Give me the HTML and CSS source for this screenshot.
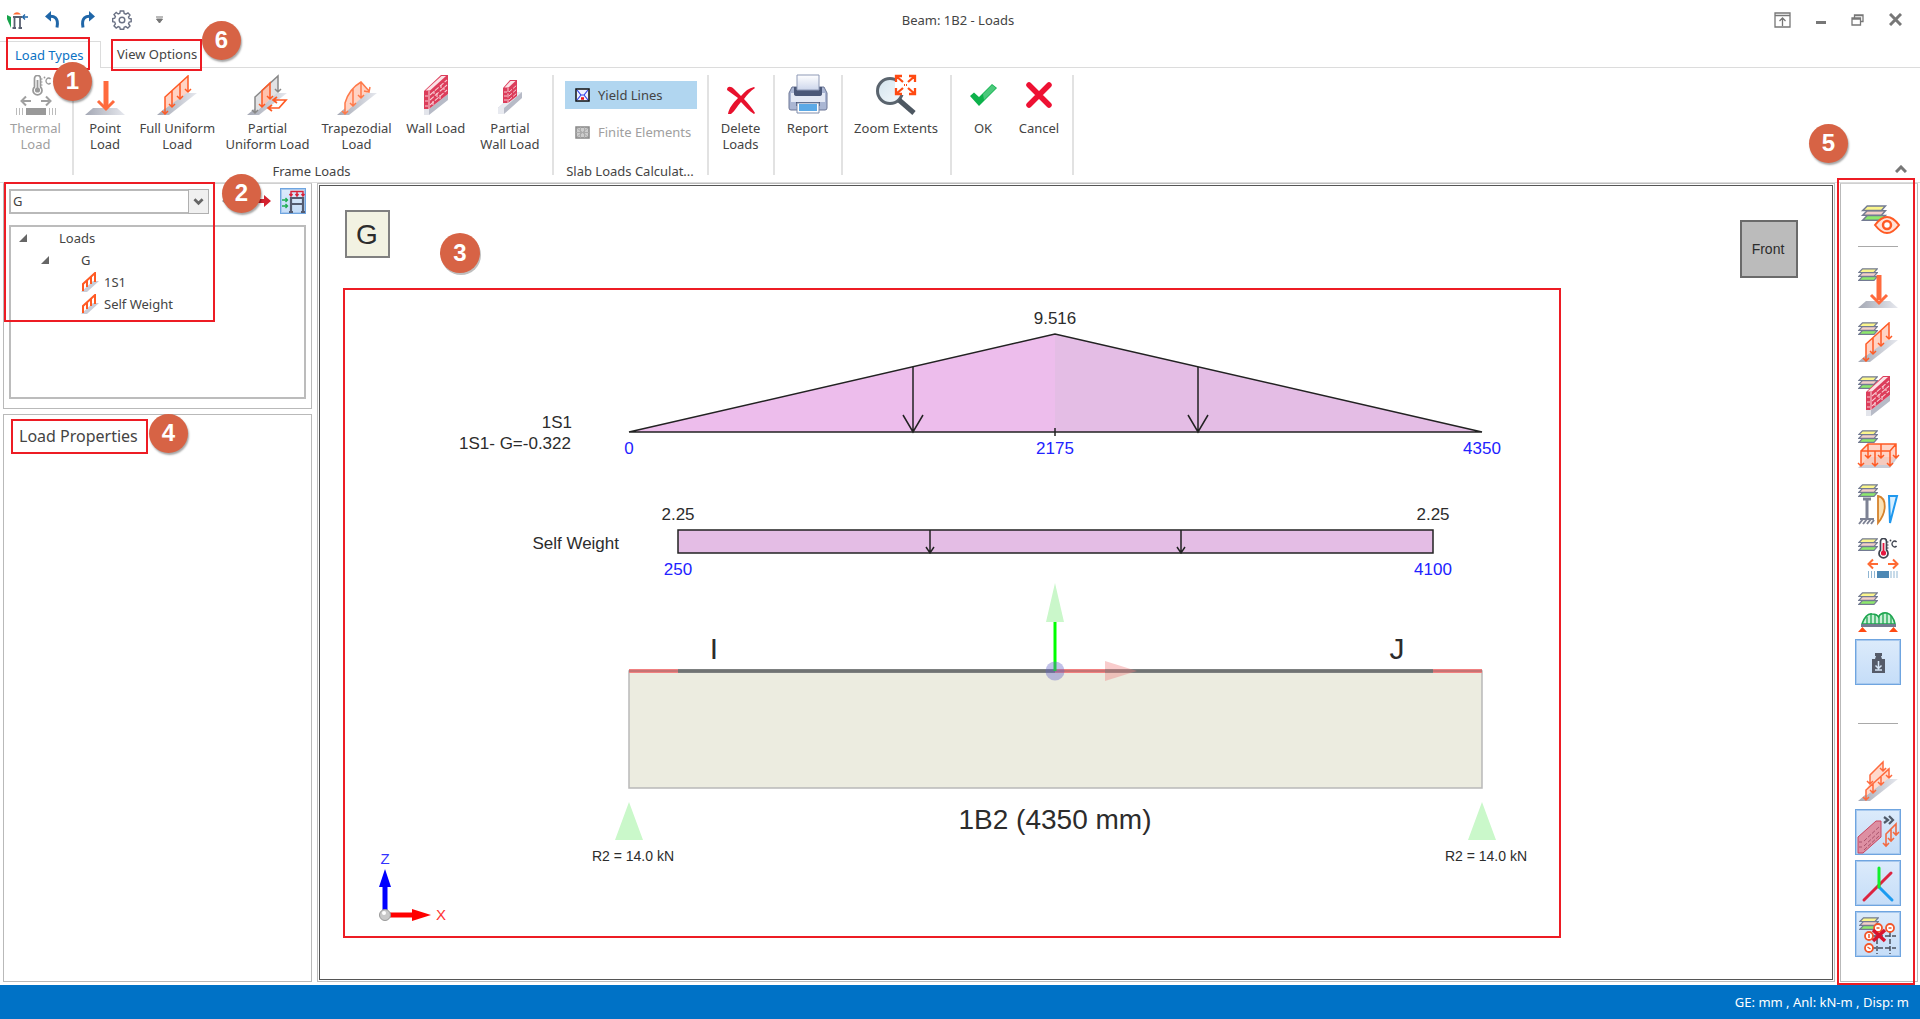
FILE: index.html
```html
<!DOCTYPE html>
<html lang="en">
<head>
<meta charset="utf-8">
<title>Beam: 1B2 - Loads</title>
<link rel="stylesheet" href="styles.css">
</head>
<body>
<svg class="defs" aria-hidden="true">
  <defs>
    <linearGradient id="steel" x1="0" y1="0" x2="1" y2="0"><stop offset="0" stop-color="#a4a8b4"/><stop offset="1" stop-color="#e6e8ee"/></linearGradient>
    <linearGradient id="glass" x1="0" y1="0" x2="1" y2="1"><stop offset="0" stop-color="#d3e4ee"/><stop offset="1" stop-color="#f4f9fc"/></linearGradient>
    <linearGradient id="paper" x1="0" y1="0" x2="0" y2="1"><stop offset="0" stop-color="#ffffff"/><stop offset="1" stop-color="#cdd6ec"/></linearGradient>
    <symbol id="layers" viewBox="0 0 20 13">
      <g stroke="#737b92" stroke-width="1.2">
        <path d="M4.5 8.6H19.300L16 12.300H.8Z" fill="#8de86c"/>
        <path d="M4.500 4.700H19.300L16 8.400H.8Z" fill="#f3cfc9"/>
        <path d="M4.500.8H19.300L16 4.500H.8Z" fill="#fbf68c"/>
      </g>
    </symbol>
    <symbol id="uniform" viewBox="0 0 40 40">
      <path d="M0 40H12L40 18H26Z" fill="url(#steel)"/>
      <path d="M8 39V22L31 1V17L8 34Z" fill="#ffd3c4"/>
      <g fill="none" stroke="#ff5a24" stroke-width="1.500">
        <path d="M8 39V22L31 1V17M15 32V15.500M23 24V8.500"/>
        <path d="M5 36l3 3 3-3M12 29l3 3 3-3M20 21l3 3 3-3M28 14l3 3 3-3"/>
      </g>
    </symbol>
    <symbol id="wall" viewBox="0 0 40 40">
      <path d="M8 34H13L32 19V25L13 40H8Z" fill="#b7bbc7"/>
      <path d="M8 34H13V40H8Z" fill="#e3e5eb"/>
      <path d="M8 16L25 0H32V19L13 34H8Z" fill="#dc3d5b"/>
      <path d="M9.500 15.500L25.500 1H30L14 15.500Z" fill="#fbe3e7"/>
      <g stroke="#f7ccd4" stroke-width="1.100" fill="none">
        <path d="M14 20L31 5M14 25L31 10M14 30L31 15" stroke-dasharray="5 1.500"/>
        <path d="M13 16V34M18 16v3M25 10v3M21 18v4M28 12v3M17 26v4M24 20v4M9 21h3M9 26h3M9 31h3"/>
      </g>
    </symbol>
    <symbol id="thermo" viewBox="0 0 20 21">
      <path d="M3.500 3.500a3 3 0 0 1 6 0V12a4.500 4.500 0 1 1-6 0Z" fill="#fff" stroke="currentColor" stroke-width="1.700"/>
      <circle cx="6.500" cy="15" r="2.600" class="bulb"/><path d="M6.500 5v10" class="bulbline" stroke-width="1.800"/>
      <path d="M9.500 4h2M9.500 7h2M9.500 10h2" stroke="currentColor"/>
      <circle cx="13.500" cy="2.500" r=".9" fill="currentColor"/>
      <path d="M19.500 4a2.500 3 0 1 0 0 4" fill="none" stroke="currentColor" stroke-width="1.300"/>
    </symbol>
  </defs>
</svg>

<div class="app">
  <header class="titlebar">
    <div class="quick">
      <button class="flat" aria-label="Loads"><svg width="22" height="20" viewBox="0 0 22 20"><path d="M1 5l4 2v11L1 9Z" fill="#16a34a"/><path d="M7 7h9M8.500 7v11M14 7v11M6.500 18h3.500M12.500 18H16" stroke="#596070" stroke-width="1.800" fill="none"/><path d="M7 4.500Q11 0 15 4.500Z" fill="#ff6a33"/><path d="M22 7h-5M19 4.500L16.500 7 19 9.500" stroke="#1f66a8" stroke-width="1.300" fill="none"/></svg></button>
      <button class="flat" aria-label="Undo"><svg width="18" height="20" viewBox="0 0 18 20"><path d="M4 6.500c6-1 11 1 9 11" stroke="#1f66a8" stroke-width="3" fill="none"/><path d="M1 6.500L7 1v10.500Z" fill="#1f66a8"/></svg></button>
      <button class="flat" aria-label="Redo"><svg width="18" height="20" viewBox="0 0 18 20"><path d="M14 6.500c-6-1-11 1-9 11" stroke="#1f66a8" stroke-width="3" fill="none"/><path d="M17 6.500L11 1v10.500Z" fill="#1f66a8"/></svg></button>
      <button class="flat" aria-label="Settings"><svg width="20" height="20" viewBox="0 0 20 20" fill="none" stroke="#6b7285" stroke-width="1.400"><circle cx="10" cy="10" r="2.800"/><path d="M8.300 1h3.400l.5 2.500 1.700.7L16 2.800 18 5l-1.500 2 .7 1.500 2 .3v2.800l-2 .4-.7 1.700L18 16l-2.200 2-2-1.400-1.700.7-.4 2H8.300l-.5-2-1.600-.7L4.200 18 2 15.800l1.400-2-.7-1.700-2-.4V8.600l2-.4.7-1.600L2 4.500 4.200 2.500l2 1.500 1.600-.7Z"/></svg></button>
      <button class="flat" aria-label="Customize quick access"><svg width="8" height="8" viewBox="0 0 8 8"><path d="M0 1h7M.5 3h6L3.500 7Z" fill="#777" stroke="#777"/></svg></button>
    </div>
    <h1 class="title">Beam: 1B2 - Loads</h1>
    <div class="window-buttons">
      <button class="flat" aria-label="Ribbon display"><svg width="17" height="16" viewBox="0 0 17 16" fill="none" stroke="#777" stroke-width="1.300"><path d="M1 1h15v14H1ZM1 3.500h15M8.500 14V6M5.500 9l3-3 3 3"/></svg></button>
      <button class="flat" aria-label="Minimize"><svg width="10" height="16" viewBox="0 0 10 16"><path d="M0 10.500h10" stroke="#777" stroke-width="3"/></svg></button>
      <button class="flat" aria-label="Restore"><svg width="13" height="14" viewBox="0 0 13 14" fill="none" stroke="#777" stroke-width="1.300"><path d="M1 5h8.500v7H1ZM1 6h8.500M3.500 4.500V2H12v6.500H9.500M3.500 2.500H12"/></svg></button>
      <button class="flat" aria-label="Close"><svg width="13" height="13" viewBox="0 0 13 13"><path d="M1 1l11 11M12 1L1 12" stroke="#777" stroke-width="3"/></svg></button>
    </div>
  </header>

  <nav class="tabs" aria-label="Ribbon tabs">
    <button class="tab tab-active">Load Types</button>
    <button class="tab">View Options</button>
    <span class="frame frame-types"></span>
    <span class="frame frame-view"></span>
    <span class="badge badge-1">1</span>
    <span class="badge badge-6">6</span>
  </nav>

  <section class="ribbon">
    <div class="group group-thermal">
      <div class="buttons">
        <button class="big" disabled><svg class="icon gray" viewBox="0 0 40 40"><use href="#thermo" x="15" y="0" width="20" height="21"/><path d="M15 26H7M10 21.500L5.500 26l4.500 4.500M25 26h8M30 21.500l4.500 4.500-4.500 4.500" fill="none" stroke="#a0a0a0" stroke-width="2"/><path d="M10 33h20v7H10Z" fill="#999"/><path d="M.5 33v7M3.500 33v7M6.500 33v7M33.500 33v7M36.500 33v7M39.500 33v7" stroke="#bbb"/></svg><span>Thermal<br>Load</span></button>
      </div>
    </div>
    <div class="group group-frame">
      <div class="buttons">
        <button class="big w-point"><svg class="icon" viewBox="0 0 40 40"><path d="M8 33H32L40 40H0Z" fill="url(#steel)"/><path d="M21 6V32" stroke="#ff6a3d" stroke-width="5"/><path d="M13 26l8 8 8-8" fill="none" stroke="#ff6a3d" stroke-width="3"/></svg><span>Point<br>Load</span></button>
        <button class="big w-full"><svg class="icon" viewBox="0 0 40 40"><use href="#uniform"/></svg><span>Full Uniform<br>Load</span></button>
        <button class="big w-partial"><svg class="icon" viewBox="0 0 40 40"><path d="M0 40H12L40 18H26Z" fill="url(#steel)"/><path d="M8 38V22L31 1V17L8 38Z" fill="#e2e2e4"/><path d="M15 32V15.500L23 8V24Z" fill="#ffc2ae"/><path d="M8 38V22L31 1V17M5 35l3 3 3-3M28 14l3 3 3-3" fill="none" stroke="#888" stroke-width="1.500"/><path d="M15 32V15.500L23 8V24M12 29l3 3 3-3M20 21l3 3 3-3" fill="none" stroke="#ff5a24" stroke-width="1.500"/><path d="M27 25H39L32 33H21M30 22l-4 3 4 3M25 30l-4 3 4 3" fill="none" stroke="#ff5a24" stroke-width="1.700"/></svg><span>Partial<br>Uniform Load</span></button>
        <button class="big w-trap"><svg class="icon" viewBox="0 0 40 40"><path d="M0 40H12L40 18H26Z" fill="url(#steel)"/><path d="M8 38V28Q12 14 24 7L32 16Z" fill="#ffd3c4"/><path d="M8 38V28Q12 14 24 7L32 16M16 30V13M24 23V7M5 36l3 3 3-3M13 28l3 3 3-3M21 20l3 3 3-3M27 16l5 1 1-5" fill="none" stroke="#ff7a4a" stroke-width="1.500"/></svg><span>Trapezodial<br>Load</span></button>
        <button class="big w-wall"><svg class="icon" viewBox="0 0 40 40"><use href="#wall"/></svg><span>Wall Load</span></button>
        <button class="big w-wall"><svg class="icon" viewBox="0 0 40 40"><path d="M8 33L26 17H32V23L14 39H8Z" fill="#b7bbc7"/><path d="M8 33H14V39H8ZM8 33L26 17H32L14 33Z" fill="#e8eaf0"/><path d="M13 13L20 5H27V21L18 28H13Z" fill="#dc3d5b"/><path d="M14.500 12.500L20.500 6H25.500L18.500 12.500Z" fill="#fbe3e7"/><path d="M18 13V28M19 17l8-7M19 21l8-7M19 25l8-7M14 17h3M14 21h3M14 25h3" stroke="#f7ccd4" stroke-dasharray="4 1.500"/></svg><span>Partial<br>Wall Load</span></button>
      </div>
      <div class="group-label">Frame Loads</div>
    </div>
    <div class="group group-slab">
      <div class="options">
        <button class="option option-on"><svg width="15" height="14" viewBox="0 0 15 14"><path d="M1 1h13v12H1Z" fill="#eef2ff" stroke="#111" stroke-width="1.500"/><path d="M2 2l4 5h3l4-5M2 12l4-5M13 12L9 7" fill="none" stroke="#3340e8" stroke-width="1.200"/><path d="M6 10.500h3" stroke="#e11" stroke-width="2.500"/></svg>Yield Lines</button>
        <button class="option" disabled><svg width="15" height="13" viewBox="0 0 15 13"><path d="M1 1h13v11H1Z" fill="#ccc" stroke="#888" stroke-width="1.500"/><path d="M1 6.500h13M5.500 1v11M9.500 1v11M2 2l11 9M13 2L2 11" stroke="#aaa"/></svg>Finite Elements</button>
      </div>
      <div class="group-label">Slab Loads Calculat...</div>
    </div>
    <div class="group group-delete">
      <div class="buttons"><button class="big"><svg class="icon" viewBox="0 0 40 40"><path d="M6 15C6 11 10 11 13 14L20 21C24 16 28 13 33 12L34 13C29 16 26 20 23 24C27 28 31 33 34 38L33 39C28 36 24 31 20 27C16 31 14 36 10 39H7C8 33 12 28 17 23Z" fill="#e8112d"/></svg><span>Delete<br>Loads</span></button></div>
    </div>
    <div class="group group-report">
      <div class="buttons"><button class="big"><svg class="icon" viewBox="0 0 40 40"><path d="M4 12H36L39 18V33Q39 35 37 35H3Q1 35 1 33V18Z" fill="#aab6d3" stroke="#6c7796"/><path d="M3 18H37V27H3Z" fill="#e4e9f5"/><path d="M6 12H34V19Q34 21 31 21H9Q6 21 6 19Z" fill="#4b5878"/><path d="M9 0H31V15H9Z" fill="url(#paper)" stroke="#8d98b5"/><path d="M8 27H32V31H8Z" fill="#4b5878"/><path d="M9 28H31V38H9Z" fill="#fff" stroke="#7f8cab"/><path d="M11 29H29V36H11Z" fill="#5ba9e6"/></svg><span>Report</span></button></div>
    </div>
    <div class="group group-zoom">
      <div class="buttons"><button class="big"><svg class="icon" viewBox="0 0 40 40"><circle cx="14" cy="16" r="12.500" fill="url(#glass)" stroke="#5a646e" stroke-width="3"/><path d="M23 25L38 38" stroke="#4d5761" stroke-width="5"/><path d="M19 0H40V20H19Z" fill="#fff"/><path d="M20 1l7 6M39 1l-7 6M20 19l7-6M39 19l-7-6M20 7V1h6M33 1h6v6M39 13v6h-6M26 19h-6v-6" fill="none" stroke="#ff4a12" stroke-width="2.300"/><path d="M28 10h3" stroke="#ff4a12" stroke-width="2" stroke-dasharray="1 1"/></svg><span>Zoom Extents</span></button></div>
    </div>
    <div class="group group-confirm">
      <div class="buttons">
        <button class="big w-ok"><svg class="icon" viewBox="0 0 40 40"><path d="M7 21L11 17.500L16 22L29 9L34 13L16 31Z" fill="#0db14b"/><path d="M20 19L29 10L33 13L21 25Z" fill="#4cc97c"/></svg><span>OK</span></button>
        <button class="big w-cancel"><svg class="icon" viewBox="0 0 40 40"><path d="M10 10L30 30M30 10L10 30" stroke="#ee1133" stroke-width="5.500" stroke-linecap="round"/></svg><span>Cancel</span></button>
      </div>
    </div>
    <button class="flat collapse" aria-label="Collapse ribbon"><svg width="12" height="8" viewBox="0 0 12 8"><path d="M1 7l5-5 5 5" fill="none" stroke="#777" stroke-width="3"/></svg></button>
  </section>

  <main class="work">
    <div class="side">
      <section class="panel cases">
        <div class="case-row">
          <div class="combo">
            <select aria-label="Load case"><option>G</option></select>
            <svg class="combo-arrow" viewBox="0 0 21 23"><path d="M6 9l4.500 4.500L15 9" fill="none" stroke="#666" stroke-width="3"/></svg>
          </div>
          <button class="flat step" aria-label="Previous case"><svg width="22" height="14" viewBox="0 0 22 14"><path d="M0 7l6-5v3h14v4H6v3Z" fill="#9a9a9a"/></svg></button>
          <button class="flat step" aria-label="Next case"><svg width="22" height="14" viewBox="0 0 22 14"><path d="M22 7l-7-6v4H2v4h13v4Z" fill="#d4222f"/></svg></button>
          <button class="toggle toggle-small" aria-label="Frame loads" aria-pressed="true"><svg width="23" height="23" viewBox="0 0 23 23"><path d="M9 22V8h12v14M9 14h12M7 22h4M19 22h4" stroke="#555c70" stroke-width="2.200" fill="none"/><path d="M9 6V1.500h12V6M15 1.500V6M7.500 4L9 6l1.500-2M13.500 4L15 6l1.500-2M19.500 4L21 6l1.500-2" stroke="#d8233a" stroke-width="1.400" fill="none"/><path d="M0 10h5M0 16h5M3.500 8l2 2-2 2M3.500 14l2 2-2 2" stroke="#1fae52" stroke-width="1.400" fill="none"/></svg></button>
        </div>
        <ul class="tree">
          <li class="row level-0"><svg class="caret" viewBox="0 0 8 8"><path d="M8 0V8H0Z" fill="#666"/></svg>Loads</li>
          <li class="row level-1"><svg class="caret" viewBox="0 0 8 8"><path d="M8 0V8H0Z" fill="#666"/></svg>G</li>
          <li class="row level-2"><svg class="leaf" viewBox="0 0 18 20"><path d="M0 20H6L18 9H12Z" fill="#c9ccd6"/><path d="M2 19V12L14 1V10M6 15V9M10 12V5" fill="none" stroke="#ff5a24" stroke-width="2"/></svg>1S1</li>
          <li class="row level-2"><svg class="leaf" viewBox="0 0 18 20"><path d="M0 20H6L18 9H12Z" fill="#c9ccd6"/><path d="M2 19V12L14 1V10M6 15V9M10 12V5" fill="none" stroke="#ff5a24" stroke-width="2"/></svg>Self Weight</li>
        </ul>
        <span class="frame frame-cases"></span>
        <span class="badge badge-2">2</span>
      </section>
      <section class="panel properties">
        <h2 class="heading">Load Properties</h2>
        <span class="frame frame-props"></span>
        <span class="badge badge-4">4</span>
      </section>
    </div>

    <section class="viewport">
      <div class="viewport-inner">
        <svg class="scene" viewBox="320 186 1512 793" role="img" aria-label="Load diagram of beam 1B2">
          <rect x="346" y="211" width="43" height="46" fill="#f2f2e2" stroke="#808080" stroke-width="2"/>
          <text class="t28 mid" x="367" y="244">G</text>
          <rect x="1741" y="221" width="56" height="56" fill="#bbb" stroke="#6a6a6a" stroke-width="2"/>
          <text class="t14 mid" x="1768" y="254">Front</text>

          <path d="M629 432L1055 334V432Z" fill="#edbdec"/>
          <path d="M1055 334L1482 432H1055Z" fill="#e4bde5"/>
          <path class="ink" d="M629 432L1055 334L1482 432Z"/>
          <path class="ink" d="M913 367V432M903 415L913 432L923 415M1198 367V432M1188 415L1198 432L1208 415M1055 428V436"/>
          <text class="t17 mid" x="1055" y="324">9.516</text>
          <text class="t17 end" x="572" y="428">1S1</text>
          <text class="t17 end" x="571" y="449">1S1- G=-0.322</text>
          <text class="t17 mid dim" x="629" y="454">0</text>
          <text class="t17 mid dim" x="1055" y="454">2175</text>
          <text class="t17 mid dim" x="1482" y="454">4350</text>

          <rect class="ink lit" x="678" y="530" width="755" height="23"/>
          <path class="ink" d="M930 530V553M926 547L930 553L934 547M1181 530V553M1177 547L1181 553L1185 547"/>
          <text class="t17 mid" x="678" y="520">2.25</text>
          <text class="t17 mid" x="1433" y="520">2.25</text>
          <text class="t17 end" x="619" y="549">Self Weight</text>
          <text class="t17 mid dim" x="678" y="575">250</text>
          <text class="t17 mid dim" x="1433" y="575">4100</text>

          <rect x="629" y="671" width="853" height="117" fill="#ecece0" stroke="#b9b9b9" stroke-width="1.500"/>
          <path d="M629 671H1482" stroke="#7d8080" stroke-width="4"/>
          <path d="M629 671H678M1055 671H1105M1433 671H1482" stroke="#f08080" stroke-width="4"/>
          <path d="M629 671H1482" stroke="#4d4d4d" stroke-opacity=".5"/>
          <path d="M1105 661L1137 671L1105 681Z" fill="#f08080" fill-opacity=".4"/>
          <path d="M1055 622V671" stroke="#0f0" stroke-width="3"/>
          <path d="M1055 583L1064 622H1046Z" fill="#caf7ca"/>
          <circle cx="1055" cy="671" r="9.500" fill="#6464c8" fill-opacity=".4"/>
          <text class="t30 mid" x="714" y="659">I</text>
          <text class="t30 mid" x="1397" y="659">J</text>
          <text class="t28 mid" x="1055" y="829">1B2 (4350 mm)</text>
          <path d="M629 802L643 840H615ZM1482 802L1496 840H1468Z" fill="#caf8ca"/>
          <text class="t14 mid" x="633" y="861">R2 = 14.0 kN</text>
          <text class="t14 mid" x="1486" y="861">R2 = 14.0 kN</text>

          <path d="M385 886V910" stroke="#00f" stroke-width="5"/><path d="M385 869L391 887H379Z" fill="#00f"/>
          <path d="M390 915H413" stroke="#f00" stroke-width="5"/><path d="M412 909L431 915L412 921Z" fill="#f00"/>
          <circle cx="385" cy="915" r="5.500" fill="#c9c9c9" stroke="#999"/><circle cx="384" cy="913" r="2" fill="#fff"/>
          <text class="t15 mid axis-z" x="385" y="864">Z</text>
          <text class="t15 mid axis-x" x="441" y="920">X</text>

          <rect x="344" y="289" width="1216" height="648" fill="none" stroke="#ed1c24" stroke-width="2"/>
          <circle cx="461" cy="255" r="20" fill="#000" fill-opacity=".25"/>
          <circle cx="460" cy="253" r="20" fill="#d76345"/>
          <text class="num mid" x="460" y="261">3</text>
        </svg>
      </div>
    </section>

    <aside class="panel tools" aria-label="View tools">
      <button class="tool" aria-label="Show loads"><svg class="icon" viewBox="0 0 40 40"><use href="#layers" x="1" y="5" width="30" height="16"/><path d="M17 25Q29 9 41 25Q29 41 17 25Z" fill="#ffe1d6" stroke="#ff5a24" stroke-width="2"/><circle cx="29" cy="25" r="4" fill="#fff" stroke="#ff5a24" stroke-width="2.500"/></svg></button>
      <hr class="rule">
      <div class="tool-set">
        <button class="tool" aria-label="Point loads"><svg class="icon" viewBox="0 0 40 40"><use href="#layers" width="20" height="13"/><path d="M8 33H32L40 40H0Z" fill="url(#steel)"/><path d="M21 7V32" stroke="#ff6a3d" stroke-width="5"/><path d="M13 27l8 8 8-8" fill="none" stroke="#ff6a3d" stroke-width="3"/></svg></button>
        <button class="tool" aria-label="Distributed loads"><svg class="icon" viewBox="0 0 40 40"><use href="#layers" width="20" height="13"/><use href="#uniform"/></svg></button>
        <button class="tool" aria-label="Wall loads"><svg class="icon" viewBox="0 0 40 40"><use href="#layers" width="20" height="13"/><use href="#wall"/></svg></button>
        <button class="tool" aria-label="Area loads"><svg class="icon" viewBox="0 0 40 40"><use href="#layers" width="20" height="13"/><path d="M0 38L10 27H40L32 38Z" fill="#c9ccd6"/><path d="M3 21L10 14H38V27L32 35H3Z" fill="#ffc9b8" fill-opacity=".8"/><path d="M3 36V21H32V36M3 21L10 14H38V28M32 21L38 14M10 14V28M23 14V28M17 21V36M0 33l3 3 3-3M14 33l3 3 3-3M29 33l3 3 3-3M7 25l3 3 3-3M20 25l3 3 3-3M35 25l3 3 3-3" fill="none" stroke="#ff5a24" stroke-width="1.500"/></svg></button>
        <button class="tool" aria-label="Lateral loads"><svg class="icon" viewBox="0 0 40 40"><use href="#layers" width="20" height="13"/><path d="M9 14V34M5 15h8" stroke="#7d8294" stroke-width="3"/><path d="M2 35H16M5 35L1 40M9 35L5 40M13 35L9 40M16 36L13 40" stroke="#7d8294" stroke-width="2"/><path d="M20 12C29 14 29 28 20 39Z" fill="#fbe1b4" stroke="#d5822c" stroke-width="1.800"/><path d="M31 12H39L32 39Z" fill="#d8efff" stroke="#1f98ee" stroke-width="2"/></svg></button>
        <button class="tool" aria-label="Thermal loads"><svg class="icon hot" viewBox="0 0 40 40"><use href="#layers" width="20" height="13"/><use href="#thermo" x="19" y="0" width="20" height="21"/><path d="M20 26H12M15 21.500L10.500 26l4.500 4.500M30 26h8M35 21.500l4.500 4.500-4.500 4.500" fill="none" stroke="#ff6a33" stroke-width="2"/><path d="M19 33H31V40H19Z" fill="#4d88b4"/><path d="M10.500 33v7M13.500 33v7M16.500 33v7M33 33v7M36 33v7M39 33v7" stroke="#8fb6d3"/></svg></button>
        <button class="tool" aria-label="Bridge loads"><svg class="icon" viewBox="0 0 40 40"><use href="#layers" width="20" height="13"/><path d="M4 32Q8 21 14 22Q19 22 20.500 25Q23 20 29 21Q35 23 37 32Z" fill="#c9f0d6" stroke="#1ea650" stroke-width="1.600"/><path d="M9 25v7M13 22v10M17 23v9M21 24v8M25 22v10M29 21v11M33 24v8" stroke="#1ea650" stroke-width="1.300"/><path d="M3 32H38V35H3Z" fill="#747b90"/><path d="M4.500 35L9 40H0ZM35.500 35L40 40H31Z" fill="#ff4a12"/></svg></button>
      </div>
      <button class="toggle" aria-label="Self weight" aria-pressed="true"><svg class="icon" viewBox="0 0 40 40"><path d="M17 11h7v3h-1l1 3h3v14H14V17h3l1-3h-1Z" fill="#555b69"/><path d="M20.500 19v7M17.500 23.500l3 3 3-3M17 28h7" fill="none" stroke="#d6e6f7" stroke-width="1.500"/></svg></button>
      <hr class="rule rule-wide">
      <div class="tool-set tool-set-tight">
        <button class="tool" aria-label="Stack loads"><svg class="icon" viewBox="0 0 40 40"><path d="M0 40H12L40 18H26Z" fill="url(#steel)"/><path d="M8 39V29L12 22V13L25 1V8L31 7V17L8 35Z" fill="#ffd9cc"/><path d="M12 23V14L25 1V10M8 39V29L31 8V17M15 32V23M23 24V15M9 20l3 3 3-3M22 7l3 3 3-3M5 36l3 3 3-3M12 29l3 3 3-3M20 21l3 3 3-3M28 14l3 3 3-3" fill="none" stroke="#ff6a3d" stroke-width="1.500"/></svg></button>
        <button class="toggle" aria-label="Convert wall loads" aria-pressed="true"><svg class="icon" viewBox="0 0 40 40"><path d="M0 25L18 9H23V25L5 41H0Z" fill="#dd8fa2" stroke="#c9445e"/><path d="M6 29L22 14M6 34L22 19M6 38L22 23M1 30h3M1 35h3" stroke="#a9536c" stroke-dasharray="4 1.500"/><path d="M26 5l4 3-4 3M31 4l4 4-4 4" fill="none" stroke="#505a68" stroke-width="2.200"/><path d="M28 34V22L38 12V23M33 29V17M25 31l3 3 3-3M30 26l3 3 3-3M35 20l3 3 3-3" fill="none" stroke="#f26a43" stroke-width="1.600"/></svg></button>
        <button class="toggle" aria-label="Local axes" aria-pressed="true"><svg class="icon" viewBox="0 0 40 40" fill="none" stroke-width="3" stroke-linecap="round"><path d="M6 37L33 10" stroke="#dc2440"/><path d="M21 24L34 37" stroke="#1c9bf0"/><path d="M21 5V24" stroke="#12f02c"/></svg></button>
        <button class="toggle" aria-label="Hide grid" aria-pressed="true"><svg class="icon" viewBox="0 0 40 40"><use href="#layers" x="1" y="3" width="20" height="13"/><path d="M19 18V40M32 18V40M13 22H38M13 34H38" stroke="#49505e" stroke-width="1.500" stroke-dasharray="5 2"/><g fill="#fff" stroke="#f2562a" stroke-width="1.800"><circle cx="20" cy="14" r="4"/><circle cx="32" cy="14" r="4"/><circle cx="11" cy="22" r="4"/><circle cx="11" cy="34" r="4"/></g><path d="M18.500 14h3M30.500 14h3M11 20v4M9.500 33l3 2" stroke="#f2562a" stroke-width="1.500"/><path d="M15 16L27 27M27 16L15 27" stroke="#d9142e" stroke-width="3.500"/></svg></button>
      </div>
      <span class="frame frame-tools"></span>
    </aside>
  </main>

  <footer class="status">GE: mm , Anl: kN-m , Disp: m</footer>
  <span class="badge badge-5">5</span>
</div>
</body>
</html>
```
FILE: styles.css
```css
* { box-sizing: border-box; }

body {
  margin: 0;
  background: #fff;
  color: #444;
  font: 13px/16px "Noto Sans", "Open Sans", sans-serif;
}

button, select { font: inherit; color: inherit; }
button { border: 0; background: none; padding: 0; }
svg { display: block; }
.defs { position: absolute; width: 0; height: 0; }

.app {
  position: relative;
  display: flex;
  flex-direction: column;
  min-height: 100vh;
}

/* title bar */
.titlebar {
  display: grid;
  grid-template-columns: 1fr auto 1fr;
  align-items: center;
  height: 41px;
  padding: 0 18px 2px 6px;
}
.flat { display: flex; align-items: center; justify-content: center; }
.quick { display: flex; align-items: center; gap: 16px; }
.quick .flat:last-child { margin-left: 8px; }
.title { margin: 0 0 0 8px; font-size: 13px; font-weight: 400; }
.window-buttons { display: flex; align-items: center; justify-content: flex-end; gap: 25px; }

/* tabs */
.tabs { position: relative; display: flex; height: 26px; }
.tab { padding: 0 16px; height: 26px; }
.tab-active {
  z-index: 1;
  width: 101px;
  height: 27px;
  padding: 0 0 0 15px;
  text-align: left;
  color: #0b72c4;
  background: #fff;
  border-top: 1px solid #dcdcdc;
  border-right: 1px solid #dcdcdc;
}

/* ribbon */
.ribbon {
  position: relative;
  display: flex;
  height: 116px;
  padding-top: 7px;
  border-top: 1px solid #dcdcdc;
  border-bottom: 1px solid #dcdcdc;
}
.group {
  display: flex;
  flex-direction: column;
  padding-right: 3px;
  background: linear-gradient(#e2e2e2, #e2e2e2) right top / 2px 100px no-repeat;
}
.buttons { display: flex; height: 78px; }
.big {
  display: flex;
  flex: 1 1 auto;
  flex-direction: column;
  align-items: center;
  gap: 5px;
  white-space: nowrap;
}
.big:disabled, .option:disabled { color: #a0a0a0; }
.icon { width: 40px; height: 40px; flex: none; overflow: visible; }
.gray { --bulb: #999; color: #999; }
.hot { color: #3f4450; }
.bulb { fill: var(--bulb, #e5173f); }
.bulbline { stroke: var(--bulb, #e5173f); }
.group-label { padding-top: 10px; text-align: center; white-space: nowrap; }

.group-thermal { width: 74px; }
.group-frame { width: 480px; padding: 0 7px 0 2px; }
.group-slab { width: 155px; }
.group-delete { width: 66px; }
.group-report { width: 68px; }
.group-zoom { width: 109px; }
.group-confirm { width: 122px; padding: 0 4px 0 6px; }
.w-point { flex-basis: 58px; }
.w-full { flex-basis: 86px; }
.w-partial { flex-basis: 94px; }
.w-trap { flex-basis: 84px; }
.w-wall { flex-basis: 74px; }
.w-ok { flex-basis: 50px; }
.w-cancel { flex-basis: 62px; }

.options { height: 78px; padding: 6px 9px 0 11px; }
.option {
  display: flex;
  align-items: center;
  gap: 8px;
  width: 100%;
  height: 28px;
  margin-bottom: 9px;
  padding-left: 10px;
  white-space: nowrap;
}
.option-on { background: #b1d6f0; }
.collapse { margin: auto 13px 9px auto; }

/* work area */
.work {
  display: grid;
  flex: 1;
  grid-template-columns: 309px minmax(0, 1fr) 78px;
  gap: 5px;
  padding: 0 2px 3px 3px;
}
.panel { position: relative; border: 1px solid #b9b9b9; border-top-color: #d0d0d0; }
.side { display: flex; flex-direction: column; gap: 5px; }
.cases { height: 226px; padding: 4px 5px; }
.properties { flex: 1; border-top-color: #b9b9b9; }

.case-row { display: flex; align-items: center; height: 26px; }
.combo { display: grid; width: 200px; height: 25px; }
.combo select {
  grid-area: 1 / 1;
  padding: 0 0 0 2px;
  appearance: none;
  border: 2px solid #b9b9b9;
  border-radius: 0;
  background: #fff;
}
.combo-arrow {
  grid-area: 1 / 1;
  justify-self: end;
  width: 21px;
  height: 25px;
  border: 1px solid #b0b0b0;
  background: #f0f0f0;
  pointer-events: none;
}
.step { width: 24px; margin-left: 12px; }
.step + .step { width: 22px; margin: 0 9px 0 4px; }
.toggle {
  display: flex;
  align-items: center;
  justify-content: center;
  width: 46px;
  height: 46px;
  border: 1px solid #6fa5e0;
  background: linear-gradient(#dcebfb, #c5ddf8);
  box-shadow: inset 0 0 0 1px #a8c9ee;
}
.toggle-small { width: 26px; height: 26px; }

.tree {
  height: 174px;
  margin: 11px 0 0;
  padding: 0 0 0 8px;
  list-style: none;
  border: 2px solid #bcbcbc;
}
.row { display: flex; align-items: center; height: 22px; }
.caret { width: 8px; height: 8px; margin-right: 32px; }
.level-1 { padding-left: 22px; }
.level-2 { padding-left: 62px; }
.leaf { width: 18px; height: 20px; margin-right: 5px; }

.heading { margin: 12px 15px; font-size: 16px; line-height: 18px; font-weight: 400; }

/* drawing area */
.viewport { display: flex; padding: 1px; border: 1px solid #bcbcbc; }
.viewport-inner { display: flex; flex: 1; min-width: 0; border: 1px solid #555; }
.scene { flex: 1; min-width: 0; width: 100%; height: 100%; font-family: "Liberation Sans", Arial, sans-serif; fill: #2c2c2c; }
.ink { fill: none; stroke: #222; stroke-width: 1.5; }
.lit { fill: #e4bde5; }
.mid { text-anchor: middle; }
.end { text-anchor: end; }
.dim { fill: #22f; }
.axis-z { fill: #33f; }
.axis-x { fill: #f33; }
.t14 { font-size: 14px; }
.t15 { font-size: 15px; }
.t17 { font-size: 17px; }
.t28 { font-size: 28px; }
.t30 { font-size: 30px; }
.num { font-size: 24px; font-weight: 700; fill: #fff; }

/* tool column */
.tools { display: flex; flex-direction: column; align-items: center; padding: 13px 3px 0 0; }
.tool { display: flex; align-items: center; justify-content: center; width: 46px; height: 46px; }
.rule { width: 40px; margin: 3px 0 18px; border: 0; border-top: 1px solid #a9a9a9; }
.rule-wide { margin: 38px 0 34px; }
.tool-set { display: flex; flex-direction: column; gap: 8px; margin-bottom: 4px; }
.tool-set-tight { gap: 5px; margin: 0; }

.status {
  height: 34px;
  padding-right: 11px;
  background: #0072c6;
  color: #fff;
  line-height: 35px;
  text-align: right;
}

/* numbered callouts */
.frame { position: absolute; z-index: 2; border: 2px solid #ed1c24; pointer-events: none; }
.frame-types { left: 6px; top: -30px; top: -30px; top: -30px; }
.frame-types { left: 6px; top: -30px; }
.frame-types { top: -30px; }
.frame-types { left: 6px; top: -4px; width: 84px; height: 33px; }
.frame-view { left: 111px; top: -2px; width: 91px; height: 32px; }
.frame-cases { left: 0; top: -2px; width: 211px; height: 140px; }
.frame-props { left: 7px; top: 4px; width: 137px; height: 35px; }
.frame-tools { left: -4px; right: 2px; top: -6px; bottom: -4px; }

.badge {
  position: absolute;
  z-index: 3;
  width: 39px;
  height: 39px;
  border-radius: 50%;
  background: #d76345;
  box-shadow: 1px 2px 2px rgba(0, 0, 0, .35);
  color: #fff;
  font: 700 24px/38px "Liberation Sans", Arial, sans-serif;
  text-align: center;
}
.badge-1 { left: 53px; top: 21px; }
.badge-6 { left: 202px; top: -20px; }
.badge-2 { left: 218px; top: -10px; }
.badge-4 { left: 145px; top: -1px; }
.badge-5 { right: 72px; top: 124px; }
```
